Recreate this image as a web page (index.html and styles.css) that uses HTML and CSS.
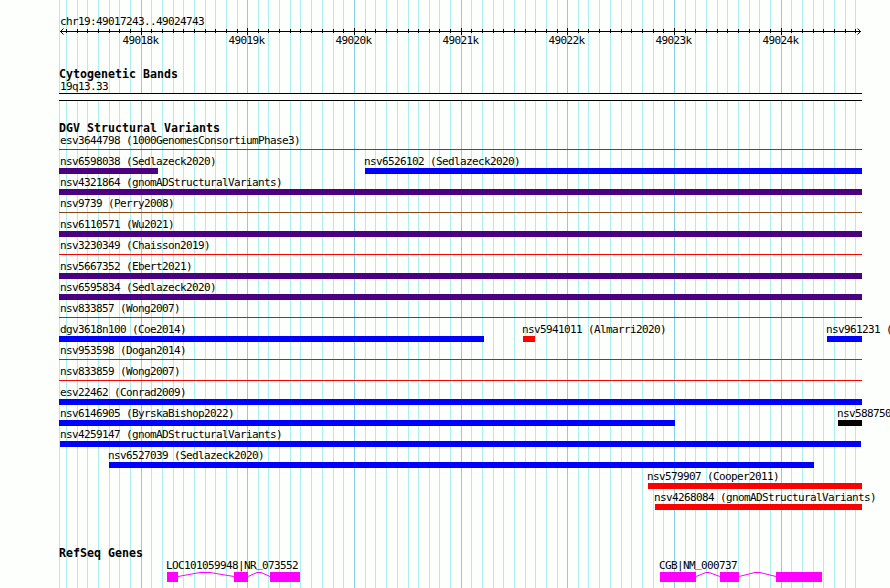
FILE: index.html
```
<!DOCTYPE html>
<html lang="en">
<head>
<meta charset="utf-8">
<title>chr19:49017243..49024743</title>
<link rel="stylesheet" href="styles.css">
</head>
<body>
<main class="browser">
<svg class="grid" width="890" height="588" aria-hidden="true">
<g transform="translate(.5 0)">
<path class="minor" d="M59 0V588M66 0V588M77 0V588M87 0V588M98 0V588M109 0V588M119 0V588M130 0V588M151 0V588M162 0V588M173 0V588M183 0V588M194 0V588M205 0V588M215 0V588M226 0V588M237 0V588M258 0V588M268 0V588M279 0V588M290 0V588M300 0V588M311 0V588M322 0V588M333 0V588M343 0V588M365 0V588M375 0V588M386 0V588M397 0V588M408 0V588M418 0V588M429 0V588M439 0V588M450 0V588M471 0V588M482 0V588M493 0V588M503 0V588M514 0V588M525 0V588M535 0V588M546 0V588M557 0V588M578 0V588M588 0V588M599 0V588M610 0V588M621 0V588M631 0V588M642 0V588M653 0V588M663 0V588M685 0V588M695 0V588M706 0V588M717 0V588M727 0V588M738 0V588M749 0V588M759 0V588M770 0V588M791 0V588M802 0V588M813 0V588M823 0V588M834 0V588M845 0V588M855 0V588"/>
<path class="major" d="M141 0V588M247 0V588M354 0V588M461 0V588M567 0V588M674 0V588M781 0V588"/>
</g>
</svg>

<header class="ruler">
<svg width="890" height="50">
<g transform="translate(.5 0)">
<path class="axis" d="M66 29v4M77 29v4M87 29v4M98 29v4M109 29v4M119 29v4M130 29v4M151 29v4M162 29v4M173 29v4M183 29v4M194 29v4M205 29v4M215 29v4M226 29v4M237 29v4M258 29v4M268 29v4M279 29v4M290 29v4M300 29v4M311 29v4M322 29v4M333 29v4M343 29v4M365 29v4M375 29v4M386 29v4M397 29v4M408 29v4M418 29v4M429 29v4M439 29v4M450 29v4M471 29v4M482 29v4M493 29v4M503 29v4M514 29v4M525 29v4M535 29v4M546 29v4M557 29v4M578 29v4M588 29v4M599 29v4M610 29v4M621 29v4M631 29v4M642 29v4M653 29v4M663 29v4M685 29v4M695 29v4M706 29v4M717 29v4M727 29v4M738 29v4M749 29v4M759 29v4M770 29v4M791 29v4M802 29v4M813 29v4M823 29v4M834 29v4M845 29v4M855 29v4"/>
<path class="axis" d="M141 28v7M247 28v7M354 28v7M461 28v7M567 28v7M674 28v7M781 28v7M59.5 31.5H860.5"/>
<path class="axis" d="M63 28.5L60 31.5L63 34.5M857 28.5L860 31.5L857 34.5"/>
</g>
<text x="60" y="25">chr19:49017243..49024743</text>
<text x="122.5" y="44">49018k</text>
<text x="228.5" y="44">49019k</text>
<text x="335.5" y="44">49020k</text>
<text x="442.5" y="44">49021k</text>
<text x="548.5" y="44">49022k</text>
<text x="655.5" y="44">49023k</text>
<text x="762.5" y="44">49024k</text>
</svg>
</header>

<section class="track cyto">
<h2>Cytogenetic Bands</h2>
<p class="label">19q13.33</p>
<div class="band"></div>
</section>

<section class="track variants">
<h2>DGV Structural Variants</h2>
<div class="row"><div class="feature thin red" style="width:803px"><span class="label">esv3644798 (1000GenomesConsortiumPhase3)</span></div></div>
<div class="row"><div class="feature purple" style="width:99px"><span class="label">nsv6598038 (Sedlazeck2020)</span></div><div class="feature blue inner" style="margin-left:207px;width:497px"><span class="label">nsv6526102 (Sedlazeck2020)</span></div></div>
<div class="row"><div class="feature purple" style="width:803px"><span class="label">nsv4321864 (gnomADStructuralVariants)</span></div></div>
<div class="row"><div class="feature thin brown" style="width:803px"><span class="label">nsv9739 (Perry2008)</span></div></div>
<div class="row"><div class="feature purple" style="width:803px"><span class="label">nsv6110571 (Wu2021)</span></div></div>
<div class="row"><div class="feature thin red" style="width:803px"><span class="label">nsv3230349 (Chaisson2019)</span></div></div>
<div class="row"><div class="feature purple" style="width:803px"><span class="label">nsv5667352 (Ebert2021)</span></div></div>
<div class="row"><div class="feature purple" style="width:803px"><span class="label">nsv6595834 (Sedlazeck2020)</span></div></div>
<div class="row"><div class="feature thin red" style="width:803px"><span class="label">nsv833857 (Wong2007)</span></div></div>
<div class="row"><div class="feature blue" style="width:425px"><span class="label">dgv3618n100 (Coe2014)</span></div><div class="feature red inner" style="margin-left:39px;width:12px"><span class="label">nsv5941011 (Almarri2020)</span></div><div class="feature blue inner" style="margin-left:292px;width:35px"><span class="label">nsv961231 (</span></div></div>
<div class="row"><div class="feature thin red" style="width:803px"><span class="label">nsv953598 (Dogan2014)</span></div></div>
<div class="row"><div class="feature thin red" style="width:803px"><span class="label">nsv833859 (Wong2007)</span></div></div>
<div class="row"><div class="feature blue" style="width:803px"><span class="label">esv22462 (Conrad2009)</span></div></div>
<div class="row"><div class="feature blue" style="width:616px"><span class="label">nsv6146905 (ByrskaBishop2022)</span></div><div class="feature black inner" style="margin-left:163px;width:24px"><span class="label">nsv588750</span></div></div>
<div class="row"><div class="feature blue flush" style="margin-left:1px;width:801px"><span class="label">nsv4259147 (gnomADStructuralVariants)</span></div></div>
<div class="row"><div class="feature blue inner" style="margin-left:50px;width:705px"><span class="label">nsv6527039 (Sedlazeck2020)</span></div></div>
<div class="row"><div class="feature red inner" style="margin-left:589px;width:214px"><span class="label">nsv579907 (Cooper2011)</span></div></div>
<div class="row"><div class="feature red inner" style="margin-left:596px;width:207px"><span class="label">nsv4268084 (gnomADStructuralVariants)</span></div></div>
</section>

<section class="track genes">
<h2>RefSeq Genes</h2>
<div class="gene-row">
<div class="gene" style="margin-left:108px;width:133px"><span class="label">LOC101059948|NR<span class="underscore">_</span>073552</span>
<svg width="133" height="10"><path class="exon" d="M0 0h11v10H0zM67 0h14v10H67zM103 0h30v10h-30z"/><path class="intron" d="M11 4.5L33 .5h10L67 4.5M81 4.5L90 .5h4L103 4.5"/></svg></div>
<div class="gene" style="margin-left:360px;width:162px"><span class="label">CGB|NM<span class="underscore">_</span>000737</span>
<svg width="162" height="10"><path class="exon" d="M0 0h36v10H0zM60 0h19v10H60zM116 0h46v10h-46z"/><path class="intron" d="M36 4.5L46 .5h3L60 4.5M79 4.5L95 .5h5L116 4.5"/></svg></div>
</div>
</section>
</main>
</body>
</html>
```
FILE: styles.css
```
* {
  box-sizing: border-box;
}

body {
  margin: 0;
  background: #fdfffc;
  color: #000;
  font: 11px/12px "DejaVu Sans Mono", monospace;
  letter-spacing: -0.622px;
}

.browser {
  position: relative;
  width: 890px;
  height: 588px;
  overflow: hidden;
  display: flex;
  flex-direction: column;
}

.grid {
  position: absolute;
  inset: 0;
  z-index: -1;
}

svg {
  display: block;
}

.grid path,
.axis,
.intron {
  fill: none;
  stroke-width: 1;
}

.minor { stroke: #afeeee; }
.major { stroke: #87ceeb; }
.axis { stroke: #000; }

.ruler {
  height: 68px;
}

.track {
  padding-left: 59px;
}

h2 {
  margin: 0;
  height: 12px;
  font-size: 11.6px;
  line-height: 12px;
  letter-spacing: 0.016px;
  white-space: nowrap;
}

.label {
  display: block;
  height: 12px;
  margin: 0 0 0 1px;
  white-space: nowrap;
}

.cyto {
  height: 54px;
}

.cyto .label {
  height: 13px;
  padding-top: 1px;
}

.band {
  width: 803px;
  height: 8px;
  border: solid #000;
  border-width: 1px 0;
  background: #fdfffc;
}

.variants {
  height: 425px;
}

.variants h2 {
  height: 13px;
}

.row {
  display: flex;
  height: 21px;
}

.feature {
  flex: none;
}

.feature::after {
  content: "";
  display: block;
  height: 6px;
  background: currentColor;
}

.thin::after {
  height: 1px;
  margin-top: 2px;
}

.feature .label {
  color: #000;
}

.inner .label,
.gene .label {
  margin-left: -1px;
}

.flush .label {
  margin-left: 0;
}

.purple { color: #4b0082; }
.blue { color: #00f; }
.red { color: #f00; }
.brown { color: #8b4513; }
.black { color: #000; }

.genes h2 {
  height: 13px;
}

.gene-row {
  display: flex;
}

.gene {
  flex: none;
}

/* lifts the underscore clear of the exon blocks */
.underscore {
  position: relative;
  top: -2px;
}

.exon { fill: #f0f; }
.intron { stroke: #f0f; }
```
